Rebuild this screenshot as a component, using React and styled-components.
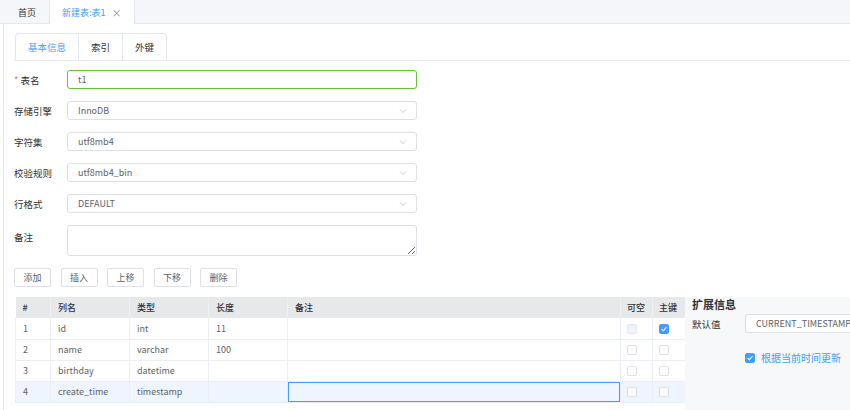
import React from 'react';
import styled, { createGlobalStyle, css } from 'styled-components';

const GlobalStyle = createGlobalStyle`
  html, body {
    margin: 0;
    padding: 0;
    background: #fff;
    overflow: hidden;
  }
  body {
    font-family: "Noto Sans CJK SC", "Noto Sans", sans-serif;
    color: #606266;
  }
  * {
    box-sizing: border-box;
  }
`;

const Page = styled.div`
  display: flex;
  flex-direction: column;
  width: 850px;
  height: 410px;
`;

const TopBar = styled.div`
  display: flex;
  height: 24px;
  padding-left: 5px;
  background: #f5f6fa;
  border-bottom: 1px solid #e4e7ed;
`;

const TopTab = styled.div`
  display: flex;
  align-items: center;
  gap: 6px;
  height: 24px;
  padding: 0 13px;
  font-size: 9px;
  color: #303133;
  ${(p) =>
    p.$active &&
    css`
      padding: 0 12px 0 12px;
      background: #fff;
      color: #409eff;
      border-left: 1px solid #e4e7ed;
      border-right: 1px solid #e4e7ed;
    `}
`;

const Close = styled.span`
  font-size: 10px;
  color: #909399;
`;

const Body = styled.div`
  flex: 1;
  display: flex;
  flex-direction: column;
  margin-left: 3px;
  padding: 9px 0 0 10px;
  border-left: 1px solid #e4e7ed;
  min-height: 0;
`;

const TabNav = styled.div`
  display: flex;
  padding-left: 1px;
  border-bottom: 1px solid #e4e7ed;
`;

const TabGroup = styled.div`
  display: flex;
  height: 27px;
  border: 1px solid #e4e7ed;
  border-bottom: none;
  border-radius: 4px 4px 0 0;
`;

const TabItem = styled.div`
  display: flex;
  align-items: center;
  padding: 0 12px;
  font-size: 9.5px;
  color: ${(p) => (p.$active ? '#409eff' : '#303133')};
  & + & {
    border-left: 1px solid #e4e7ed;
  }
`;

const Form = styled.div`
  display: flex;
  flex-direction: column;
  gap: 12px;
  margin-top: 9px;
`;

const FormRow = styled.div`
  display: flex;
  align-items: ${(p) => (p.$top ? 'flex-start' : 'center')};
`;

const Label = styled.div`
  width: 53px;
  font-size: 9.5px;
  color: #303133;
  padding-top: ${(p) => (p.$top ? '5px' : '0')};
`;

const Star = styled.span`
  color: #f56c6c;
  margin-right: 2px;
`;

const TextInput = styled.input`
  width: 350px;
  height: 19px;
  padding: 0 10px;
  border: 1px solid ${(p) => (p.$valid ? '#67c23a' : '#dcdfe6')};
  border-radius: 3px;
  font-family: inherit;
  font-size: 9px;
  color: #606266;
  outline: none;
  background: #fff;
`;

const SelectBox = styled.div`
  display: flex;
  align-items: center;
  justify-content: space-between;
  width: 350px;
  height: 19px;
  padding: 0 8px 0 10px;
  border: 1px solid #dcdfe6;
  border-radius: 3px;
  font-size: 9px;
  color: #606266;
  background: #fff;
`;

const TextArea = styled.textarea`
  width: 350px;
  height: 31px;
  border: 1px solid #dcdfe6;
  border-radius: 3px;
  font-family: inherit;
  font-size: 9px;
  resize: vertical;
  outline: none;
`;

const ButtonRow = styled.div`
  display: flex;
  gap: 9.5px;
  margin-top: 12px;
`;

const Button = styled.button`
  width: 37px;
  height: 19px;
  padding: 0;
  border: 1px solid #dcdfe6;
  border-radius: 2px;
  background: #fff;
  font-family: inherit;
  font-size: 9px;
  color: #606266;
`;

const Lower = styled.div`
  flex: 1;
  display: flex;
  margin-top: 10px;
  min-height: 0;
`;

const TableWrap = styled.div`
  width: 670px;
  margin-left: 1px;
  flex-shrink: 0;
`;

const Table = styled.table`
  width: 670px;
  border-collapse: collapse;
  table-layout: fixed;
  font-size: 9px;
`;

const Th = styled.th`
  height: 21px;
  padding: ${(p) => (p.$narrow ? '0 6px' : '0 7px')};
  text-align: left;
  font-weight: 500;
  font-size: 9px;
  color: #303133;
  background: #e6e8ea;
  border-right: 1px solid #f0f1f3;
  white-space: nowrap;
  overflow: hidden;
`;

const Tr = styled.tr`
  background: ${(p) => (p.$current ? '#eef5fe' : '#fff')};
`;

const Td = styled.td`
  height: 21px;
  padding: ${(p) => (p.$flush ? '0' : p.$narrow ? '0 6px' : '0 7px')};
  color: #606266;
  border: 1px solid #ebeef5;
  border-top: none;
  white-space: nowrap;
  line-height: 1;
`;

const CellEdit = styled.div`
  height: 20px;
  border: 1px solid #409eff;
  background: #eef5fe;
`;

const Box = styled.span`
  display: inline-flex;
  align-items: center;
  justify-content: center;
  width: 10px;
  height: 10px;
  border-radius: 2px;
  vertical-align: middle;
  border: 1px solid ${(p) => (p.$checked ? '#409eff' : p.$disabled ? '#e4e7ed' : '#dcdfe6')};
  background: ${(p) => (p.$checked ? '#409eff' : p.$disabled ? '#edf2fc' : '#fff')};
`;

const Side = styled.div`
  flex: 1;
  display: flex;
  flex-direction: column;
  padding-left: 7px;
  background: #f7f8fa;
`;

const SideTitle = styled.div`
  height: 14px;
  line-height: 14px;
  font-size: 11px;
  font-weight: 700;
  color: #303133;
`;

const SideRow = styled.div`
  display: flex;
  align-items: center;
  margin-top: 3px;
`;

const SideLabel = styled.div`
  width: 53px;
  font-size: 9.5px;
  color: #303133;
`;

const SideInput = styled.div`
  display: flex;
  align-items: center;
  width: 140px;
  height: 19px;
  padding-left: 10px;
  border: 1px solid #dcdfe6;
  border-right: none;
  border-radius: 3px 0 0 3px;
  background: #fff;
  font-size: 9px;
  color: #606266;
  white-space: nowrap;
  flex-shrink: 0;
`;

const CheckRow = styled.div`
  display: flex;
  align-items: center;
  gap: 6px;
  margin: 17px 0 0 53px;
  font-size: 10px;
  color: #409eff;
`;

const Chevron = () => (
  <svg width="10" height="10" viewBox="0 0 10 10" fill="none">
    <path d="M2 3.5 L5 6.5 L8 3.5" stroke="#c0c4cc" strokeWidth="0.9" />
  </svg>
);

const Check = ({ checked, disabled }) => (
  <Box $checked={checked} $disabled={disabled}>
    {checked && (
      <svg width="8" height="8" viewBox="0 0 8 8" fill="none">
        <path d="M1.5 4.2 L3.3 5.8 L6.5 2.2" stroke="#fff" strokeWidth="1.1" />
      </svg>
    )}
  </Box>
);

const selects = [
  ['存储引擎', 'InnoDB'],
  ['字符集', 'utf8mb4'],
  ['校验规则', 'utf8mb4_bin'],
  ['行格式', 'DEFAULT'],
];

const columns = [
  { id: 1, name: 'id', type: 'int', len: '11', nullable: false, pk: true, disabled: true },
  { id: 2, name: 'name', type: 'varchar', len: '100', nullable: false, pk: false },
  { id: 3, name: 'birthday', type: 'datetime', len: '', nullable: false, pk: false },
  { id: 4, name: 'create_time', type: 'timestamp', len: '', nullable: false, pk: false, current: true },
];

const widths = [35, 79, 79, 79, 333, 32, 33];

export default function App() {
  return (
    <Page>
      <GlobalStyle />
      <TopBar>
        <TopTab>首页</TopTab>
        <TopTab $active>
          新建表:表1 <Close>×</Close>
        </TopTab>
      </TopBar>
      <Body>
        <TabNav>
          <TabGroup>
            <TabItem $active>基本信息</TabItem>
            <TabItem>索引</TabItem>
            <TabItem>外键</TabItem>
          </TabGroup>
        </TabNav>

        <Form>
          <FormRow>
            <Label>
              <Star>*</Star>表名
            </Label>
            <TextInput $valid defaultValue="t1" />
          </FormRow>
          {selects.map(([label, value]) => (
            <FormRow key={label}>
              <Label>{label}</Label>
              <SelectBox>
                {value}
                <Chevron />
              </SelectBox>
            </FormRow>
          ))}
          <FormRow $top>
            <Label $top>备注</Label>
            <TextArea />
          </FormRow>
        </Form>

        <ButtonRow>
          {['添加', '插入', '上移', '下移', '删除'].map((t) => (
            <Button key={t}>{t}</Button>
          ))}
        </ButtonRow>

        <Lower>
          <TableWrap>
            <Table>
              <colgroup>
                {widths.map((w, i) => (
                  <col key={i} style={{ width: w }} />
                ))}
              </colgroup>
              <thead>
                <tr>
                  <Th>#</Th>
                  <Th>列名</Th>
                  <Th>类型</Th>
                  <Th>长度</Th>
                  <Th>备注</Th>
                  <Th $narrow>可空</Th>
                  <Th $narrow>主键</Th>
                </tr>
              </thead>
              <tbody>
                {columns.map((c) => (
                  <Tr key={c.id} $current={c.current}>
                    <Td>{c.id}</Td>
                    <Td>{c.name}</Td>
                    <Td>{c.type}</Td>
                    <Td>{c.len}</Td>
                    <Td $flush>{c.current && <CellEdit />}</Td>
                    <Td $narrow>
                      <Check checked={c.nullable} disabled={c.disabled} />
                    </Td>
                    <Td $narrow>
                      <Check checked={c.pk} />
                    </Td>
                  </Tr>
                ))}
              </tbody>
            </Table>
          </TableWrap>
          <Side>
            <SideTitle>扩展信息</SideTitle>
            <SideRow>
              <SideLabel>默认值</SideLabel>
              <SideInput>CURRENT_TIMESTAMP</SideInput>
            </SideRow>
            <CheckRow>
              <Check checked />
              根据当前时间更新
            </CheckRow>
          </Side>
        </Lower>
      </Body>
    </Page>
  );
}
